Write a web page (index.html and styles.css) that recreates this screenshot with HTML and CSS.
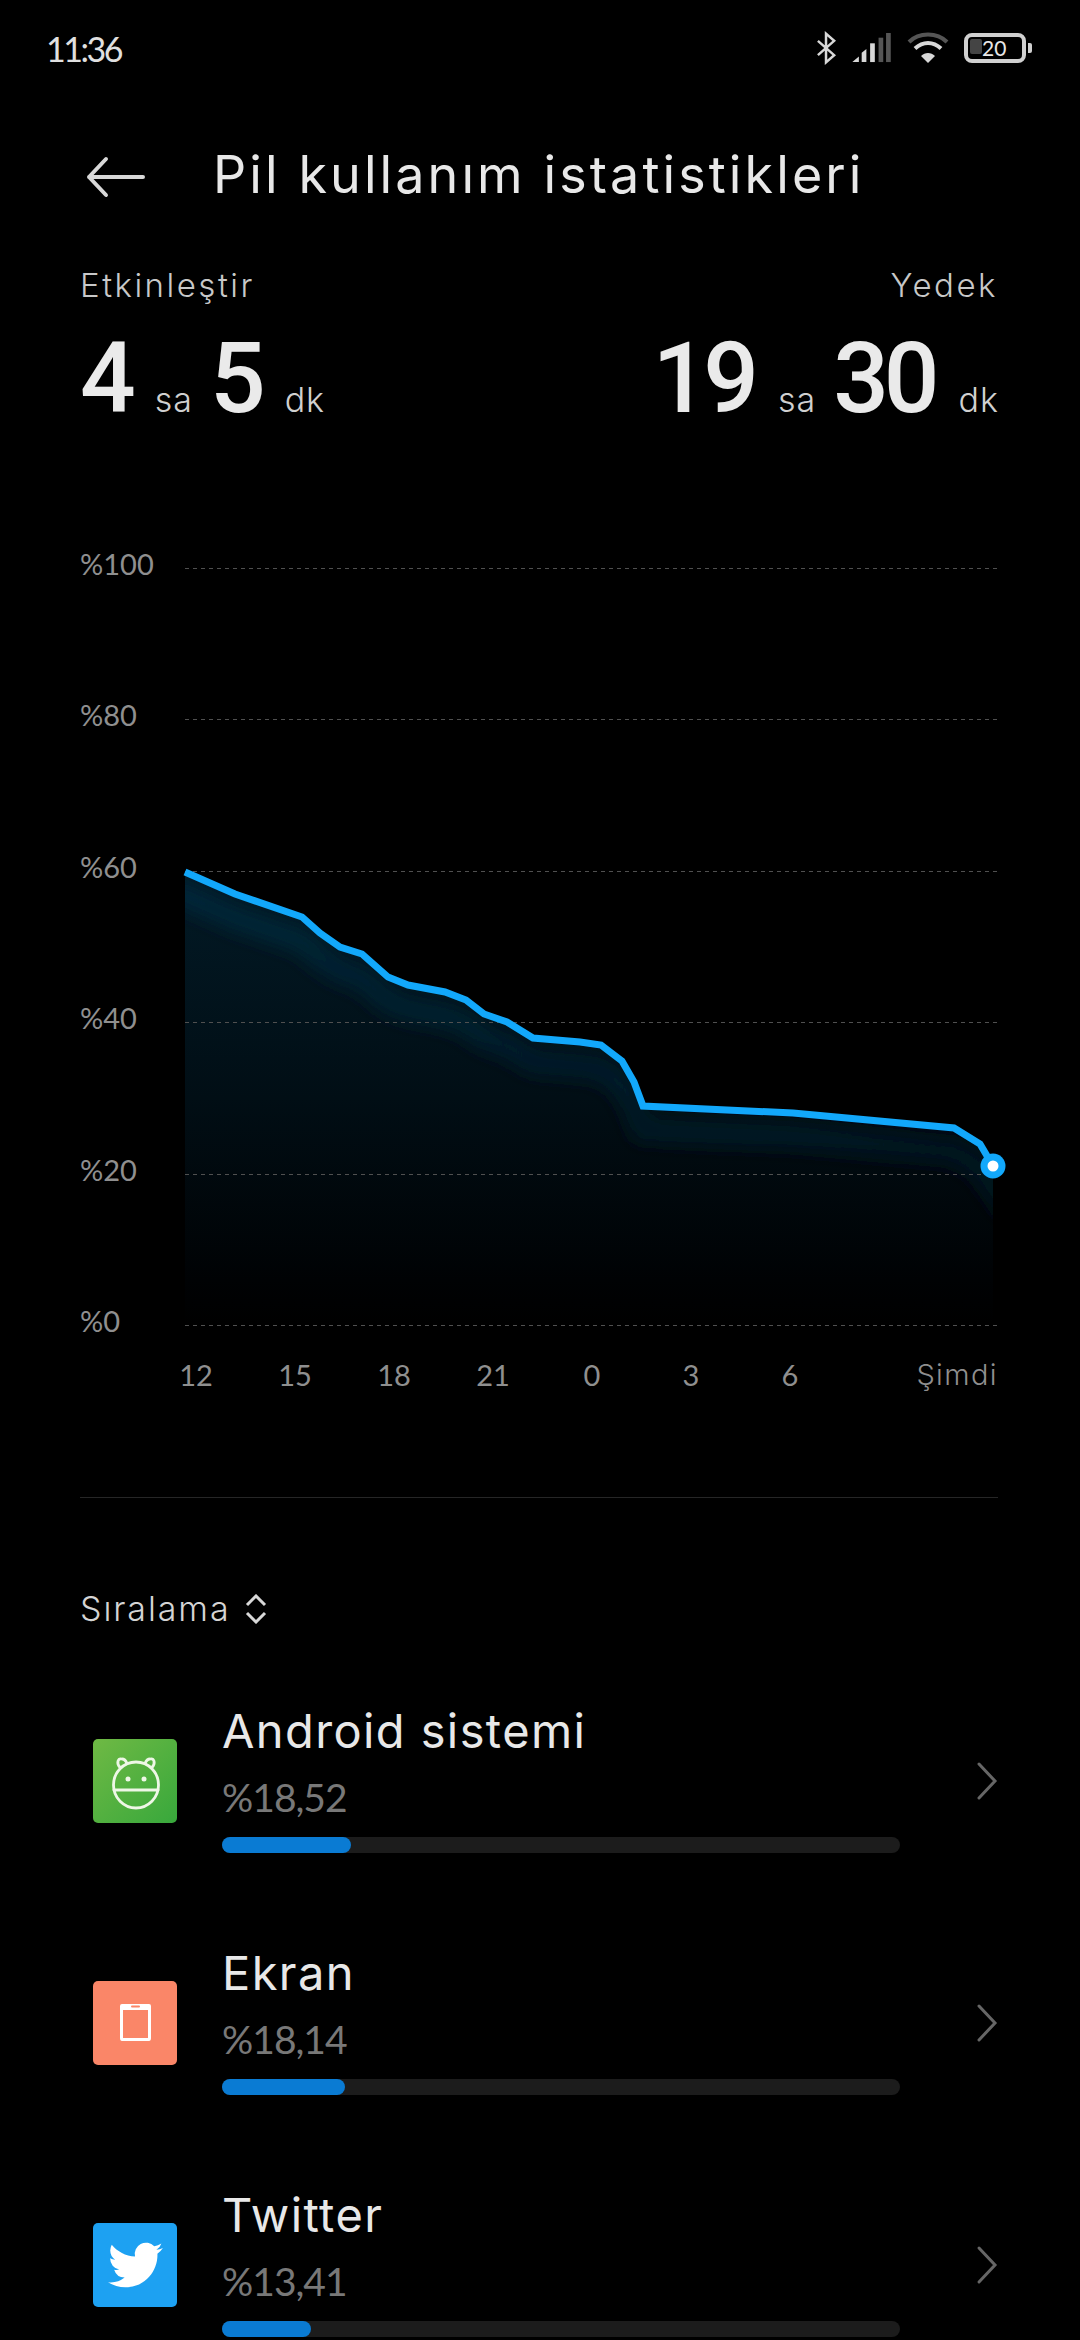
FILE: index.html
```html
<!DOCTYPE html>
<html lang="tr">
<head>
    <meta charset="UTF-8" />
    <title>Pil kullanım istatistikleri</title>
    <link rel="stylesheet" href="styles.css">
</head>
<body>
    <div class="status-bar">
        <span class="saat">11:36</span>
        <div class="status-icons">
            <svg width="21" height="34" viewBox="0 0 22 34" fill="none" stroke="#d8d8d8" stroke-width="2.6"><path d="M2 9.5 L19 24.5 L10.5 32 V2 L19 9.5 L2 24.5"/></svg>
            <svg width="40" height="30" viewBox="0 0 42 32">
                <path d="M0 31 L7 25 V31Z M10 21 L15 17 V31 H10Z" fill="#d8d8d8"/>
                <rect x="19" y="11" width="5" height="20" fill="#d8d8d8"/>
                <rect x="28" y="5" width="5" height="26" fill="#555"/>
                <rect x="36" y="0" width="5" height="31" fill="#555"/>
            </svg>
            <svg width="42" height="32" viewBox="0 0 42 32" fill="none">
                <path d="M2 10 C12 0 30 0 40 10" stroke="#555" stroke-width="4"/>
                <path d="M8 16.500 C16 9 26 9 34 16.500" stroke="#d8d8d8" stroke-width="4"/>
                <path d="M21 31 L14 24 C18 20 24 20 28 24Z" fill="#d8d8d8"/>
            </svg>
            <div class="pil">
                <span class="pil-dolu"></span>
                <span class="pil-yazi">20</span>
            </div>
            <span class="pil-uc"></span>
        </div>
    </div>

    <header class="baslik">
        <svg class="geri" width="60" height="44" viewBox="0 0 60 44" fill="none" stroke="#d8d8d8" stroke-width="4" stroke-linecap="round" stroke-linejoin="round"><path d="M58 22 H4 M21 4 L4 22 L21 40"/></svg>
        <h1>Pil kullanım istatistikleri</h1>
    </header>

    <section class="ozet">
        <div class="ozet-kol">
            <p class="ozet-etiket">Etkinleştir</p>
            <p class="ozet-sure"><b>4</b><span>sa</span><b>5</b><span>dk</span></p>
        </div>
        <div class="ozet-kol sag">
            <p class="ozet-etiket">Yedek</p>
            <p class="ozet-sure"><b>19</b><span>sa</span><b>30</b><span>dk</span></p>
        </div>
    </section>

    <section class="grafik">
        <svg class="alan" width="1080" height="800" viewBox="0 540 1080 800">
            <defs>
                <linearGradient id="dolgu" x1="0" y1="870" x2="0" y2="1325" gradientUnits="userSpaceOnUse">
                    <stop offset="0" stop-color="#021a26"/>
                    <stop offset="0.5" stop-color="#010e15"/>
                    <stop offset="0.9" stop-color="#000204"/>
                    <stop offset="1" stop-color="#000"/>
                </linearGradient>
                <linearGradient id="parilti" x1="0" y1="880" x2="0" y2="1200" gradientUnits="userSpaceOnUse">
                    <stop offset="0" stop-color="#03283a"/>
                    <stop offset="1" stop-color="#02141d"/>
                </linearGradient>
                <filter id="bulanik" x="-10%" y="-20%" width="120%" height="140%"><feGaussianBlur stdDeviation="9"/></filter>
                <clipPath id="kirp"><path d="M185 872 L235 894 L302 917 L320 933 L340 947 L362 954 L388 977 L408 985 L445 992 L466 1000 L484 1014 L507 1022 L533 1038 L580 1042 L601 1045 L622 1061 L634 1082 L643 1106 L793 1113 L954 1128 L980 1144 L993 1166 V1325 H185Z"/></clipPath>
            </defs>
            <g clip-path="url(#kirp)">
                <rect x="185" y="860" width="808" height="465" fill="url(#dolgu)"/>
                <path transform="translate(0 24)" d="M170 865 L235 894 L302 917 L320 933 L340 947 L362 954 L388 977 L408 985 L445 992 L466 1000 L484 1014 L507 1022 L533 1038 L580 1042 L601 1045 L622 1061 L634 1082 L643 1106 L793 1113 L954 1128 L980 1144 L1010 1190" fill="none" stroke="url(#parilti)" stroke-width="22" filter="url(#bulanik)"/>
            </g>
        </svg>
        <div class="satir"><span>%100</span><i></i></div>
        <div class="satir"><span>%80</span><i></i></div>
        <div class="satir"><span>%60</span><i></i></div>
        <div class="satir"><span>%40</span><i></i></div>
        <div class="satir"><span>%20</span><i></i></div>
        <div class="satir son"><span>%0</span><i></i></div>
        <svg class="egri" width="1080" height="800" viewBox="0 540 1080 800">
            <path d="M185 872 L235 894 L302 917 L320 933 L340 947 L362 954 L388 977 L408 985 L445 992 L466 1000 L484 1014 L507 1022 L533 1038 L580 1042 L601 1045 L622 1061 L634 1082 L643 1106 L793 1113 L954 1128 L980 1144 L993 1166" fill="none" stroke="#12a8fb" stroke-width="7"/>
            <circle cx="993" cy="1166" r="12.500" fill="#12a8fb"/>
            <circle cx="993" cy="1166" r="5.500" fill="#fff"/>
        </svg>
        <div class="saatler">
            <span>12</span><span>15</span><span>18</span><span>21</span><span>0</span><span>3</span><span>6</span><span class="simdi">Şimdi</span>
        </div>
    </section>

    <hr class="ayrac" />

    <div class="siralama">
        <span>Sıralama</span>
        <svg width="22" height="30" viewBox="0 0 22 30" fill="none" stroke="#d8d8d8" stroke-width="3"><path d="M2 11 L11 2 L20 11 M2 19 L11 28 L20 19"/></svg>
    </div>

    <ul class="liste">
        <li class="uygulama">
            <div class="ikon yesil">
                <svg width="84" height="84" viewBox="0 0 84 84" fill="none" stroke="#eef7e6" stroke-width="2.800" stroke-linecap="round">
                    <ellipse cx="43" cy="46" rx="22.500" ry="23"/>
                    <path d="M27 28.500 C23 24 25 19 29 20 C31 20 33 22 34 24.500"/>
                    <path d="M59 28.500 C63 24 61 19 57 20 C55 20 53 22 52 24.500"/>
                    <path d="M21 51 H65"/>
                    <circle cx="35" cy="40" r="2.500" fill="#eef7e6" stroke="none"/>
                    <circle cx="51" cy="40" r="2.500" fill="#eef7e6" stroke="none"/>
                </svg>
            </div>
            <div class="bilgi">
                <h2>Android sistemi</h2>
                <p>%18,52</p>
                <div class="cubuk"><div class="dolu" style="width: 129px"></div></div>
            </div>
            <svg class="ok" width="22" height="40" viewBox="0 0 22 40" fill="none" stroke="#666" stroke-width="3" stroke-linecap="round"><path d="M3 3 L19 20 L3 37"/></svg>
        </li>
        <li class="uygulama">
            <div class="ikon turuncu">
                <svg width="84" height="84" viewBox="0 0 84 84"><path fill-rule="evenodd" fill="#fff" d="M29 23 H56 Q58 23 58 25 V57 Q58 60 56 60 H29 Q27 60 27 57 V25 Q27 23 29 23Z M30 29 V57 H55 V29Z"/><rect x="38" y="24.500" width="9" height="2" rx="1" fill="#fa8668"/></svg>
            </div>
            <div class="bilgi">
                <h2>Ekran</h2>
                <p>%18,14</p>
                <div class="cubuk"><div class="dolu" style="width: 123px"></div></div>
            </div>
            <svg class="ok" width="22" height="40" viewBox="0 0 22 40" fill="none" stroke="#666" stroke-width="3" stroke-linecap="round"><path d="M3 3 L19 20 L3 37"/></svg>
        </li>
        <li class="uygulama">
            <div class="ikon mavi">
                <svg width="84" height="84" viewBox="0 0 24 24"><g transform="translate(4.290 4.140) scale(.655)"><path fill="#fff" d="M23.950 4.570a10 10 0 0 1-2.830.78 4.930 4.930 0 0 0 2.170-2.720 9.860 9.860 0 0 1-3.120 1.180 4.920 4.920 0 0 0-8.380 4.480C7.690 8.100 4.070 6.130 1.640 3.160a4.820 4.820 0 0 0-.67 2.480c0 1.710.87 3.210 2.190 4.090a4.900 4.900 0 0 1-2.230-.62v.06a4.920 4.920 0 0 0 3.950 4.830 5 5 0 0 1-2.210.08 4.940 4.940 0 0 0 4.600 3.420A9.870 9.870 0 0 1 0 19.540a14 14 0 0 0 7.560 2.210c9.050 0 14-7.500 14-13.980 0-.21 0-.42-.02-.63a9.940 9.940 0 0 0 2.410-2.550z"/></g></svg>
            </div>
            <div class="bilgi">
                <h2>Twitter</h2>
                <p>%13,41</p>
                <div class="cubuk"><div class="dolu" style="width: 89px"></div></div>
            </div>
            <svg class="ok" width="22" height="40" viewBox="0 0 22 40" fill="none" stroke="#666" stroke-width="3" stroke-linecap="round"><path d="M3 3 L19 20 L3 37"/></svg>
        </li>
    </ul>
</body>
</html>
```

FILE: styles.css
```css
html, body {
    margin: 0;
    height: 2340px;
    overflow: hidden;
    background-color: #000;
}
body {
    font-family: Lato, "Noto Sans", sans-serif;
    color: #e6e6e6;
}
p, h1, h2, ul {
    margin: 0;
    padding: 0;
    font-weight: normal;
}

.status-bar {
    display: flex;
    justify-content: space-between;
    align-items: center;
    height: 96px;
    padding: 0 48px 0 46px;
}
.saat {
    font-size: 34px;
    letter-spacing: -2.5px;
    color: #e0e0e0;
}
.status-icons {
    display: flex;
    align-items: center;
    gap: 15px;
}
.pil {
    position: relative;
    box-sizing: border-box;
    width: 62px;
    height: 30px;
    border: 4px solid #d0d0d0;
    border-radius: 8px;
}
.pil-dolu {
    position: absolute;
    left: 2px;
    top: 2px;
    width: 12px;
    height: 15px;
    background-color: #444;
    border-radius: 2px;
}
.pil-yazi {
    position: absolute;
    left: 14px;
    top: -1px;
    font-size: 21px;
    line-height: 24px;
    color: #e8e8e8;
}
.pil-uc {
    width: 4px;
    height: 10px;
    margin-left: -13px;
    background-color: #d0d0d0;
    border-radius: 0 2px 2px 0;
}

.baslik {
    display: flex;
    align-items: center;
    height: 162px;
    padding-left: 85px;
}
.geri {
    flex: none;
    margin-right: 68px;
}
.baslik h1 {
    font-family: Inter, sans-serif;
    font-size: 52px;
    font-weight: 400;
    letter-spacing: 3.1px;
    margin-top: -6px;
    color: #e8e8e8;
}

.ozet {
    box-sizing: border-box;
    display: flex;
    justify-content: space-between;
    height: 202px;
    padding: 7px 82px 0 80px;
}
.ozet-kol.sag {
    text-align: right;
}
.ozet-etiket {
    font-family: Inter, sans-serif;
    font-size: 33px;
    font-weight: 300;
    line-height: 40px;
    letter-spacing: 2.5px;
    color: #c8c8c8;
}
.ozet-sure {
    margin-top: 32px;
    line-height: 84px;
    white-space: nowrap;
}
.ozet-sure b {
    font-family: Roboto, sans-serif;
    font-size: 98px;
    font-weight: 500;
    letter-spacing: -5px;
    color: #eaeaea;
}
.ozet-sure span {
    font-family: Inter, sans-serif;
    font-size: 34px;
    font-weight: 300;
    letter-spacing: 1px;
    margin: 0 17px 0 24px;
    color: #d0d0d0;
}
.ozet-sure span:last-child {
    margin-right: -1px;
}

.grafik {
    position: relative;
    margin-top: 108px;
    padding: 0 82px 0 80px;
}
.satir {
    position: relative;
    z-index: 1;
    display: flex;
    align-items: flex-start;
    height: 151.4px;
    font-size: 29px;
    color: #8f8f8f;
}
.satir span {
    width: 105px;
    line-height: 30px;
    margin-top: -19px;
}
.satir i {
    flex: 1;
    height: 1px;
    background: repeating-linear-gradient(90deg, #505050 0 4px, transparent 4px 8px);
}
.satir.son {
    height: 30px;
}
.alan, .egri {
    position: absolute;
    left: 0;
    top: -28px;
}
.egri {
    z-index: 2;
}
.saatler {
    display: grid;
    grid-template-columns: repeat(7, 99px) 1fr;
    margin-top: 2px;
    margin-left: 66.5px;
    font-size: 29px;
    color: #8f8f8f;
}
.saatler span {
    text-align: center;
}
.saatler .simdi {
    font-family: Inter, sans-serif;
    font-weight: 300;
    letter-spacing: 1.4px;
    text-align: right;
}

.ayrac {
    margin: 105px 82px 0 80px;
    border: none;
    border-top: 1px solid #262626;
}

.siralama {
    display: flex;
    align-items: center;
    gap: 15px;
    margin-top: 91px;
    padding-left: 80px;
    font-family: Inter, sans-serif;
    font-size: 34px;
    font-weight: 300;
    line-height: 40px;
    letter-spacing: 1.9px;
    color: #d4d4d4;
}

.liste {
    list-style: none;
    margin-top: 31px;
}
.uygulama {
    display: flex;
    align-items: center;
    height: 242px;
    padding: 0 82px 0 93px;
    box-sizing: border-box;
}
.ikon {
    flex: none;
    width: 84px;
    height: 84px;
    border-radius: 5px;
}
.yesil {
    background: linear-gradient(135deg, #6fb944, #38a83c);
}
.turuncu {
    background-color: #fa8668;
}
.mavi {
    background-color: #1da1f2;
}
.bilgi {
    width: 678px;
    margin-left: 45px;
    margin-top: -8px;
}
.bilgi h2 {
    font-family: Inter, sans-serif;
    font-size: 47px;
    font-weight: 400;
    line-height: 60px;
    letter-spacing: 1.4px;
    color: #e8e8e8;
}
.bilgi p {
    margin-top: 11px;
    font-size: 39px;
    line-height: 50px;
    letter-spacing: -1px;
    color: #787878;
}
.cubuk {
    height: 16px;
    margin-top: 15px;
    border-radius: 8px;
    background-color: #1c1c1c;
}
.dolu {
    height: 16px;
    border-radius: 8px;
    background-color: #0a7bd3;
}
.ok {
    margin-left: auto;
}
```
